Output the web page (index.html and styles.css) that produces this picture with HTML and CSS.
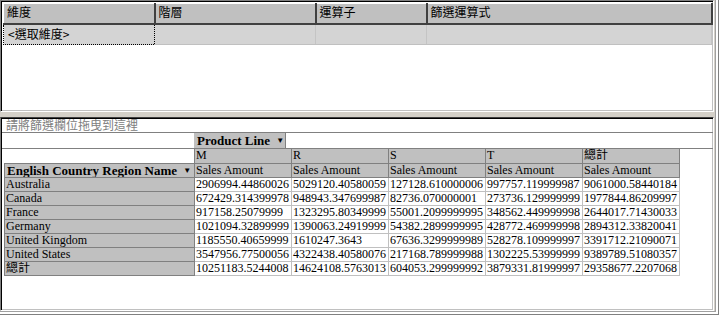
FILE: index.html
```html
<!DOCTYPE html>
<html lang="zh-Hant">
<head>
  <meta charset="UTF-8" />
  <title>樞紐分析表</title>
  <link rel="stylesheet" href="styles.css">
</head>
<body>

<div class="window">
  <!-- 篩選條件設定 -->
  <div class="panel top-panel">
    <table class="filter-grid">
      <colgroup>
        <col class="c-dim"><col class="c-level"><col class="c-op"><col class="c-expr">
      </colgroup>
      <tr>
        <th>維度</th>
        <th>階層</th>
        <th>運算子</th>
        <th>篩選運算式</th>
      </tr>
      <tr>
        <td class="focus">&lt;選取維度&gt;</td>
        <td></td>
        <td></td>
        <td></td>
      </tr>
    </table>
  </div>

  <div class="splitter"></div>

  <!-- 樞紐分析表 -->
  <div class="panel pivot-panel">
    <div class="drop-zone">請將篩選欄位拖曳到這裡</div>
    <div class="col-area">
      <span class="field-btn">Product Line <span class="arrow">▼</span></span>
    </div>
    <table class="pivot">
      <colgroup>
        <col class="c-row"><col class="c-val"><col class="c-val"><col class="c-val"><col class="c-val"><col class="c-val">
      </colgroup>
      <tr class="member-row">
        <td class="blank"></td>
        <th>M</th><th>R</th><th>S</th><th>T</th><th>總計</th>
      </tr>
      <tr class="measure-row">
        <th class="row-field">English Country Region Name <span class="arrow">▼</span></th>
        <th>Sales Amount</th><th>Sales Amount</th><th>Sales Amount</th><th>Sales Amount</th><th>Sales Amount</th>
      </tr>
      <tr><th>Australia</th><td>2906994.44860026</td><td>5029120.40580059</td><td>127128.610000006</td><td>997757.119999987</td><td>9061000.58440184</td></tr>
      <tr><th>Canada</th><td>672429.314399978</td><td>948943.347699987</td><td>82736.070000001</td><td>273736.129999999</td><td>1977844.86209997</td></tr>
      <tr><th>France</th><td>917158.25079999</td><td>1323295.80349999</td><td>55001.2099999995</td><td>348562.449999998</td><td>2644017.71430033</td></tr>
      <tr><th>Germany</th><td>1021094.32899999</td><td>1390063.24919999</td><td>54382.2899999995</td><td>428772.469999998</td><td>2894312.33820041</td></tr>
      <tr><th>United Kingdom</th><td>1185550.40659999</td><td>1610247.3643</td><td>67636.3299999989</td><td>528278.109999997</td><td>3391712.21090071</td></tr>
      <tr><th>United States</th><td>3547956.77500056</td><td>4322438.40580076</td><td>217168.789999988</td><td>1302225.53999999</td><td>9389789.51080357</td></tr>
      <tr><th>總計</th><td>10251183.5244008</td><td>14624108.5763013</td><td>604053.299999992</td><td>3879331.81999997</td><td>29358677.2207068</td></tr>
    </table>
  </div>
</div>

</body>
</html>
```

FILE: styles.css
```css
body {
  margin: 0;
  background: #d4d0c8;
}

.window {
  width: 719px;
  height: 315px;
  box-sizing: border-box;
  padding: 0 5px 4px 0;
  display: flex;
  flex-direction: column;
  background: #d4d0c8;
  box-shadow: inset -1px -1px 0 #808080, inset -3px -3px 0 #ffffff, inset -4px -4px 0 #a0a0a0;
}

/* sunken panels */
.panel {
  background: #fff;
  border-top: 1px solid #808080;
  border-left: 1px solid #808080;
  border-right: 1px solid #ffffff;
  border-bottom: 1px solid #ffffff;
  box-shadow: inset 1px 1px 0 #000, inset -1px -1px 0 #c0c0c0;
}

.top-panel {
  height: 112px;
  box-sizing: border-box;
  padding: 2px 1px 0 2px;
}

.splitter {
  height: 5px;
}

.pivot-panel {
  flex: 1;
  box-sizing: border-box;
  padding: 0 0 0 1px;
  border-top-color: #404040;
}

/* filter grid */
.filter-grid {
  border-collapse: collapse;
  table-layout: fixed;
  width: 708px;
  font-family: "Noto Sans CJK TC", "Liberation Sans", sans-serif;
  font-size: 12px;
  color: #000;
}

.c-dim { width: 151px; }
.c-level { width: 161px; }
.c-op { width: 111px; }
.c-expr { width: 285px; }

.filter-grid th {
  height: 20px;
  box-sizing: border-box;
  padding: 0 0 2px 3px;
  text-align: left;
  font-weight: normal;
  background: #c0c0c0;
  border-top: 1px solid #fff;
  border-left: 1px solid #fff;
  border-right: 2px solid #404040;
  border-bottom: 2px solid #404040;
  line-height: 16px;
}

.filter-grid td {
  height: 21px;
  box-sizing: border-box;
  padding: 0 0 1px 4px;
  background: #d4d4d4;
  border-right: 1px solid #c4c4c4;
  border-bottom: 1px solid #c0c0c0;
  line-height: 16px;
}

.filter-grid td.focus {
  border: 1px dotted #000;
}

/* pivot table */
.drop-zone {
  height: 14px;
  padding-left: 4px;
  border-bottom: 1px solid #808080;
  font-family: "Noto Sans CJK TC", "Liberation Sans", sans-serif;
  font-size: 12px;
  line-height: 14px;
  color: #808080;
}

.col-area {
  height: 15px;
  padding-left: 192px;
  border-bottom: 1px solid #808080;
  font-family: "Liberation Serif", "Noto Sans CJK TC", serif;
  font-size: 13px;
}

.field-btn {
  display: inline-block;
  box-sizing: border-box;
  width: 92px;
  height: 15px;
  padding-left: 3px;
  background: #c0c0c0;
  border-right: 1px solid #808080;
  font-weight: bold;
  line-height: 15px;
}

.arrow {
  font-size: 8px;
  vertical-align: 2px;
  margin-left: 3px;
}

.pivot {
  border-collapse: collapse;
  table-layout: fixed;
  margin-left: 2px;
  font-family: "Liberation Serif", "Noto Sans CJK TC", serif;
  font-size: 12px;
  color: #000;
}

.c-row { width: 190px; }
.c-val { width: 97px; }

.pivot th,
.pivot td {
  height: 14px;
  box-sizing: border-box;
  padding: 0 0 0 1px;
  line-height: 13px;
  text-align: left;
  white-space: nowrap;
  overflow: hidden;
}

.pivot th {
  font-weight: normal;
  background: #c0c0c0;
  border: 1px solid #808080;
}

.pivot td {
  background: #fff;
  border: 1px solid #c0c0c0;
}

.pivot .member-row th {
  height: 13px;
  border-top: none;
}

.pivot td.blank {
  border: none;
  border-right: 1px solid #808080;
}

.pivot .measure-row th {
  height: 14px;
}

.pivot th.row-field {
  font-size: 13px;
  font-weight: bold;
  padding-left: 2px;
}
```
